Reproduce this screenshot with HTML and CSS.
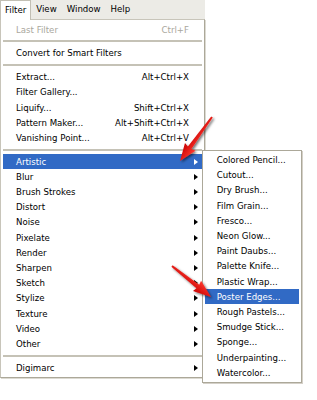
FILE: index.html
```html
<!DOCTYPE html>
<html lang="en">
<head>
  <meta charset="UTF-8">
  <title>Filter menu</title>
  <link rel="stylesheet" href="styles.css">
</head>
<body>

<div class="screen">
  <div class="menubar">
    <span class="top active">Filter</span>
    <span class="top">View</span>
    <span class="top">Window</span>
    <span class="top">Help</span>
  </div>

  <div class="menu main">
    <div class="item disabled"><span>Last Filter</span><span class="key">Ctrl+F</span></div>
    <div class="sep"></div>
    <div class="item"><span>Convert for Smart Filters</span></div>
    <div class="sep"></div>
    <div class="item"><span>Extract...</span><span class="key">Alt+Ctrl+X</span></div>
    <div class="item"><span>Filter Gallery...</span></div>
    <div class="item"><span>Liquify...</span><span class="key">Shift+Ctrl+X</span></div>
    <div class="item"><span>Pattern Maker...</span><span class="key">Alt+Shift+Ctrl+X</span></div>
    <div class="item"><span>Vanishing Point...</span><span class="key">Alt+Ctrl+V</span></div>
    <div class="sep"></div>
    <div class="item hl"><span>Artistic</span><i class="caret"></i></div>
    <div class="item"><span>Blur</span><i class="caret"></i></div>
    <div class="item"><span>Brush Strokes</span><i class="caret"></i></div>
    <div class="item"><span>Distort</span><i class="caret"></i></div>
    <div class="item"><span>Noise</span><i class="caret"></i></div>
    <div class="item"><span>Pixelate</span><i class="caret"></i></div>
    <div class="item"><span>Render</span><i class="caret"></i></div>
    <div class="item"><span>Sharpen</span><i class="caret"></i></div>
    <div class="item"><span>Sketch</span><i class="caret"></i></div>
    <div class="item"><span>Stylize</span><i class="caret"></i></div>
    <div class="item"><span>Texture</span><i class="caret"></i></div>
    <div class="item"><span>Video</span><i class="caret"></i></div>
    <div class="item"><span>Other</span><i class="caret"></i></div>
    <div class="sep"></div>
    <div class="item"><span>Digimarc</span><i class="caret"></i></div>
  </div>

  <div class="menu submenu">
    <div class="item">Colored Pencil...</div>
    <div class="item">Cutout...</div>
    <div class="item">Dry Brush...</div>
    <div class="item">Film Grain...</div>
    <div class="item">Fresco...</div>
    <div class="item">Neon Glow...</div>
    <div class="item">Paint Daubs...</div>
    <div class="item">Palette Knife...</div>
    <div class="item">Plastic Wrap...</div>
    <div class="item hl">Poster Edges...</div>
    <div class="item">Rough Pastels...</div>
    <div class="item">Smudge Stick...</div>
    <div class="item">Sponge...</div>
    <div class="item">Underpainting...</div>
    <div class="item">Watercolor...</div>
  </div>

  <!-- red pointer arrows drawn over the menus -->
  <svg class="arrows" width="317" height="400" viewBox="0 0 317 400">
    <defs>
      <filter id="shadow" x="-20%" y="-20%" width="140%" height="140%">
        <feDropShadow dx="1.5" dy="1.5" stdDeviation="1" flood-color="#000" flood-opacity="0.55"/>
      </filter>
      <linearGradient id="red" x1="0" y1="0" x2="0" y2="1">
        <stop offset="0" stop-color="#ff3a30"/>
        <stop offset="1" stop-color="#c80000"/>
      </linearGradient>
    </defs>
    <g filter="url(#shadow)">
      <polygon transform="translate(212 117) rotate(126)" fill="url(#red)"
        points="0,-1 38,-2.2 37,-6.5 54.4,0 37,6.5 38,2.2 0,1"/>
      <polygon transform="translate(172 266) rotate(38.5)" fill="url(#red)"
        points="0,-1 33,-2.2 32,-6.5 49.8,0 32,6.5 33,2.2 0,1"/>
    </g>
  </svg>
</div>

</body>
</html>
```

FILE: styles.css
```css
body {
  margin: 0;
  background: #fff;
  font-family: "DejaVu Sans", sans-serif;
  font-size: 8.6px;
  color: #000;
}
.screen {
  position: relative;
  width: 317px;
  height: 400px;
  overflow: hidden;
}
.menubar {
  display: flex;
  width: 205px;
  height: 19px;
  background: #ecebe6;
}
.top {
  padding: 0 5px;
  line-height: 19px;
}
.top.active {
  position: relative;
  z-index: 1;
  box-sizing: border-box;
  height: 20px;
  padding: 0 4px;
  line-height: 18px;
  background: #fff;
  border: 1px solid #c2bfb4;
  border-bottom: none;
}
.menu {
  box-sizing: border-box;
  background: #fff;
  border: 1px solid #aca899;
  padding: 2px;
}
.main {
  width: 205px;
  border-left-color: #c8c5ba;
  border-top-color: #c8c5ba;
  box-shadow: 1px 1px 0 #dcdad2;
}
.item {
  display: flex;
  align-items: center;
  height: 15.2px;
  padding: 0 13px;
  white-space: nowrap;
}
.key {
  margin-left: auto;
}
.caret {
  margin-left: auto;
  margin-right: -9px;
  width: 0;
  height: 0;
  border-left: 4px solid #000;
  border-top: 3.5px solid transparent;
  border-bottom: 3.5px solid transparent;
}
.disabled {
  color: #a9a79d;
}
.hl {
  background: #316ac5;
  color: #fff;
}
.hl .caret {
  border-left-color: #fff;
}
.sep {
  display: flex;
  align-items: center;
  height: 8.6px;
}
.sep::before {
  content: "";
  flex: 1;
  border-top: 2px solid #c5c2b6;
}
.submenu {
  position: absolute;
  left: 202px;
  top: 149.5px;
  width: 100px;
  box-shadow: 1px 1px 0 #d4d0c8;
}
.submenu .item {
  padding: 0 8px 0 11.7px;
}
.arrows {
  position: absolute;
  left: 0;
  top: 0;
  pointer-events: none;
}
```
